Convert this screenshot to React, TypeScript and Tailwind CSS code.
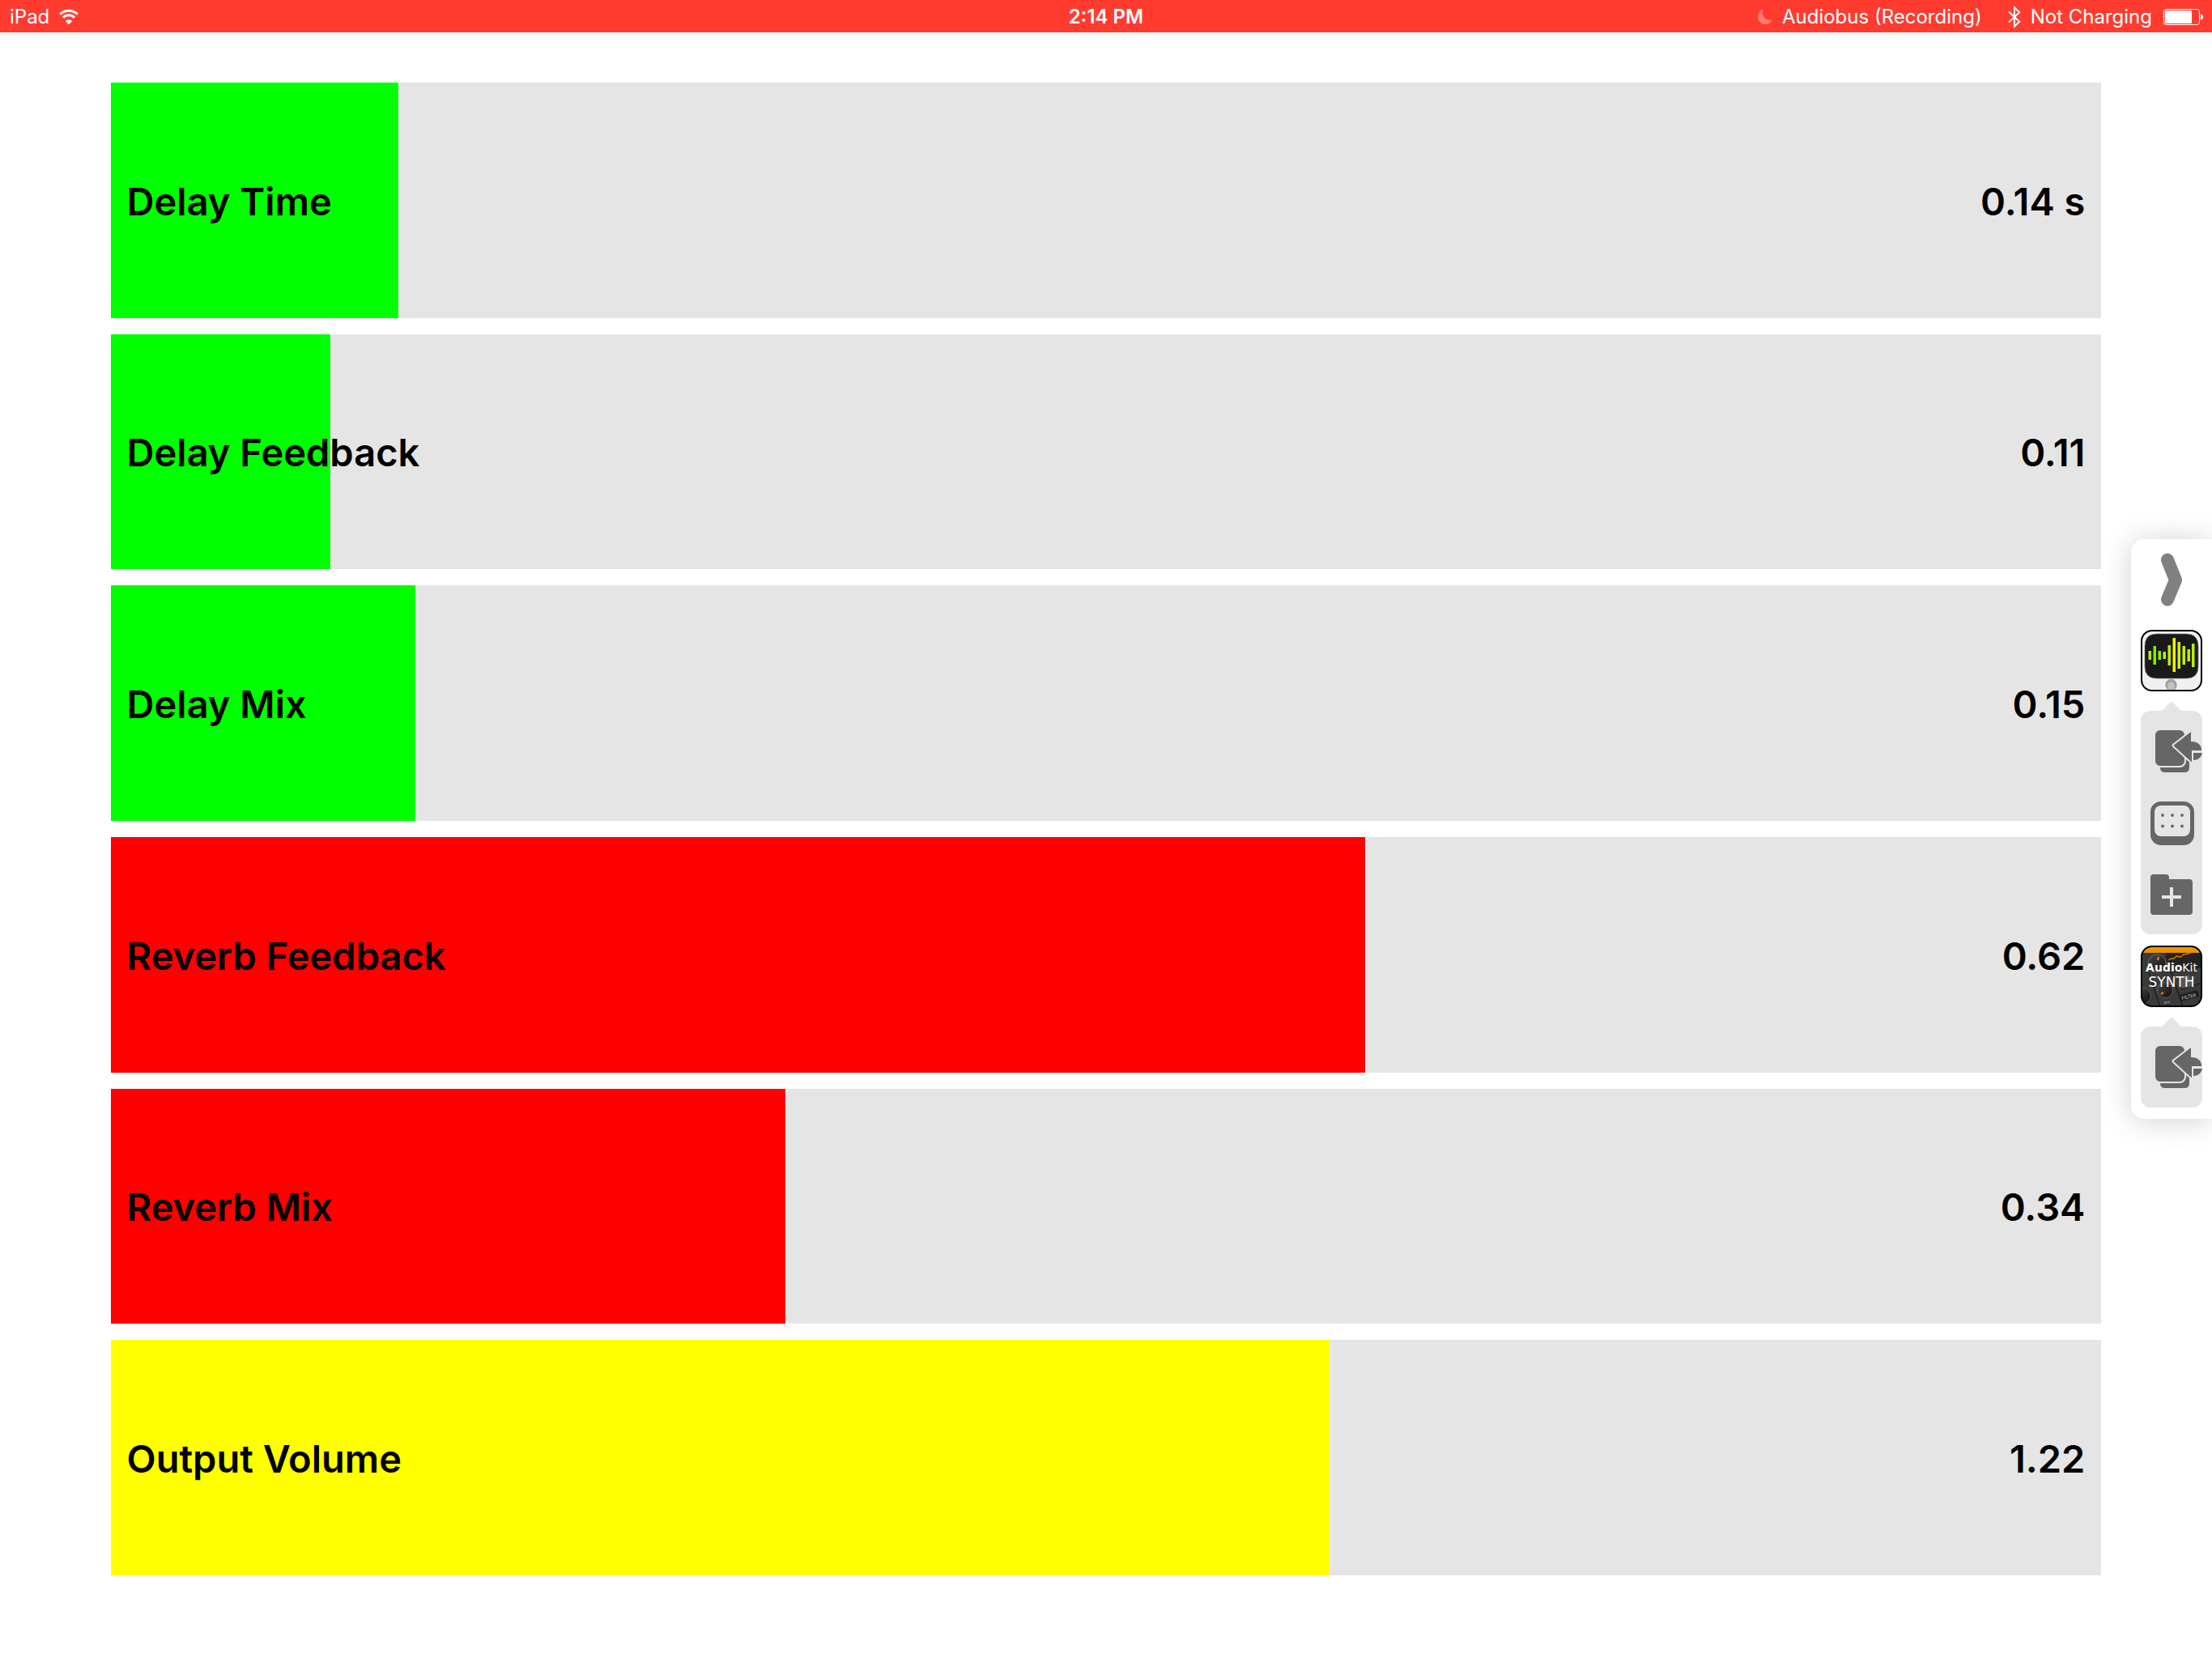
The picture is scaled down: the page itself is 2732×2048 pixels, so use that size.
import { useState, type ReactNode } from "react";

type Tone = "green" | "red" | "yellow";

const toneClass: Record<Tone, string> = {
  green: "bg-[#00ff00]",
  red: "bg-[#ff0000]",
  yellow: "bg-[#ffff00]",
};

type Parameter = { id: string; label: string; value: number; max: number; unit?: string; tone: Tone };

const parameters: Parameter[] = [
  { id: "delay-time", label: "Delay Time", value: 0.1444, max: 1, unit: " s", tone: "green" },
  { id: "delay-feedback", label: "Delay Feedback", value: 0.1102, max: 1, tone: "green" },
  { id: "delay-mix", label: "Delay Mix", value: 0.153, max: 1, tone: "green" },
  { id: "reverb-feedback", label: "Reverb Feedback", value: 0.6203, max: 0.9845, tone: "red" },
  { id: "reverb-mix", label: "Reverb Mix", value: 0.339, max: 1, tone: "red" },
  { id: "output-volume", label: "Output Volume", value: 1.2245, max: 2, tone: "yellow" },
];

function ParameterSlider({ id, label, value, max, unit = "", tone }: Parameter) {
  const [current, setCurrent] = useState(value);
  return (
    <div className="relative flex items-center justify-between overflow-hidden bg-[#e5e5e5] px-5 pt-0.5 text-[47px] leading-none font-semibold text-black">
      <div className={`absolute inset-y-0 left-0 ${toneClass[tone]}`} style={{ width: `${(current / max) * 100}%` }} />
      <label htmlFor={id} className="relative">
        {label}
      </label>
      <output htmlFor={id} className="relative">
        {current.toFixed(2)}
        {unit}
      </output>
      <input
        id={id}
        type="range"
        min={0}
        max={max}
        step="any"
        value={current}
        onChange={(e) => setCurrent(Number(e.target.value))}
        className="absolute inset-0 h-full w-full cursor-pointer opacity-0"
      />
    </div>
  );
}

function WifiIcon() {
  return (
    <svg viewBox="0 0 24 20" className="h-5 w-6" fill="none" aria-hidden="true">
      <path d="M1.2 6.6a15.4 15.4 0 0 1 21.6 0" stroke="white" strokeWidth="3" />
      <path d="M5 10.7a10 10 0 0 1 14 0" stroke="white" strokeWidth="3" />
      <path d="M12 19.2 7.8 14.9a6 6 0 0 1 8.4 0z" fill="white" />
    </svg>
  );
}

function MoonIcon() {
  return (
    <svg viewBox="0 0 18 20" className="h-5 w-[18px]" aria-hidden="true">
      <path d="M6.6.6A9.4 9.4 0 1 0 18 13.2 9.2 9.2 0 0 1 6.6.6z" fill="#ff7a71" />
    </svg>
  );
}

function BluetoothIcon() {
  return (
    <svg viewBox="0 0 16 28" className="h-7 w-4" fill="none" stroke="white" strokeWidth="2" aria-hidden="true">
      <path d="M1 7.5 14.2 19.8 8 25.6V2.4l6.2 5.8L1 20.5" />
    </svg>
  );
}

function BatteryIcon() {
  return (
    <svg viewBox="0 0 50 20" className="h-5 w-[50px]" aria-hidden="true">
      <rect x=".5" y=".5" width="44" height="19" rx="3" fill="none" stroke="white" />
      <rect x="2" y="2" width="33" height="16" rx="1" fill="white" />
      <path d="M46 6.5c2 0 3 1.500 3 3.500s-1 3.500-3 3.500z" fill="white" />
    </svg>
  );
}

function StatusBar() {
  return (
    <header className="grid h-10 grid-cols-3 items-center bg-[#ff3b30] px-2.5 pt-0.5 text-2xl leading-7 text-white">
      <div className="flex items-center gap-3 pl-0.5">
        <span>iPad</span>
        <WifiIcon />
      </div>
      <time className="text-center font-semibold">2:14 PM</time>
      <div className="flex items-center justify-end">
        <MoonIcon />
        <span className="ml-3">Audiobus (Recording)</span>
        <span className="ml-8 flex">
          <BluetoothIcon />
        </span>
        <span className="mr-3.5 ml-3">Not Charging</span>
        <BatteryIcon />
      </div>
    </header>
  );
}

function CollapseIcon() {
  return (
    <svg viewBox="0 0 28 68" className="h-[68px] w-7" aria-hidden="true">
      <path d="M9 9.500 19 34.500 9 58.500" fill="none" stroke="#808080" strokeWidth="16" strokeLinecap="round" strokeLinejoin="round" />
    </svg>
  );
}

const waveBars = [
  { x: 9.5, top: 26, bottom: 37, color: "#b4f000" },
  { x: 15.5, top: 20, bottom: 43, color: "#7df000" },
  { x: 21.5, top: 26, bottom: 37, color: "#8ff000" },
  { x: 27.5, top: 27, bottom: 36, color: "#b8f000" },
  { x: 33.5, top: 19, bottom: 44, color: "#b8f000" },
  { x: 39.5, top: 10, bottom: 52, color: "#f2f200" },
  { x: 45.5, top: 15, bottom: 48, color: "#d0f000" },
  { x: 51.5, top: 20, bottom: 43, color: "#c4f000" },
  { x: 57.5, top: 24, bottom: 39, color: "#b8f000" },
  { x: 63, top: 17, bottom: 46, color: "#b8f000" },
];

function AudiobusIcon() {
  return (
    <svg viewBox="0 0 76 76" className="size-[76px]" aria-hidden="true">
      <rect x="1" y="1" width="74" height="74" rx="13" fill="#f0f0f0" stroke="black" strokeWidth="2" />
      <path d="M5 20Q5 5 20 5H56Q71 5 71 20V45Q71 60 56 60H20Q5 60 5 45z" fill="#191919" stroke="#777070" strokeWidth=".7" />
      {waveBars.map((bar) => (
        <rect key={bar.x} x={bar.x} y={bar.top} width="3.500" height={bar.bottom - bar.top} fill={bar.color} />
      ))}
      <clipPath id="home-button">
        <rect x="20" y="60" width="36" height="14" />
      </clipPath>
      <g clipPath="url(#home-button)">
        <circle cx="37.500" cy="68" r="7.200" fill="#a0a0a0" />
        <ellipse cx="37.500" cy="70" rx="4.300" ry="6" fill="#c2c2c2" />
      </g>
    </svg>
  );
}

function SynthIcon() {
  return (
    <svg viewBox="0 0 76 76" className="size-[76px]" aria-hidden="true">
      <defs>
        <clipPath id="synth-tile">
          <rect x="1" y="1" width="74" height="74" rx="13" />
        </clipPath>
        <linearGradient id="knob" x1="0" y1="0" x2="1" y2="1">
          <stop offset="0" stopColor="#4a4a4a" />
          <stop offset="1" stopColor="#0c0c0c" />
        </linearGradient>
        <linearGradient id="strip" x1="0" y1="0" x2="0" y2="1">
          <stop offset="0" stopColor="#f5a10c" />
          <stop offset="1" stopColor="#e28c00" />
        </linearGradient>
      </defs>
      <g clipPath="url(#synth-tile)">
        <rect width="76" height="76" fill="#3a3a3b" />
        <path d="M31 9 76 -2V27L36 34z" fill="#232324" />
        <path d="M10 33 24 76M31 12 52 76M50 54 76 46" stroke="#202020" strokeWidth="1.500" />
        <path d="m47 39 13-3 4 14-13 3z" fill="#55565a" />
        <path d="m48 61 22-6 2 8-22 6z" fill="#1c1c1c" />
        <circle cx="20" cy="22" r="11" fill="url(#knob)" stroke="#707070" strokeWidth=".8" />
        <circle cx="30" cy="55" r="9.500" fill="url(#knob)" stroke="#6a6a6a" strokeWidth=".8" />
        <circle cx="3" cy="62" r="9.500" fill="url(#knob)" stroke="#6a6a6a" strokeWidth=".8" />
        <path d="m22 14-1 4M25 60l3-2" stroke="#f07800" strokeWidth="2.500" />
        <path d="m34 18 4-2h3l3-3 5 1 4-3 5-1 14-5" fill="none" stroke="#d98000" strokeWidth="1.300" />
        <rect width="76" height="9" fill="url(#strip)" />
        <text x="51" y="67" fontFamily="Roboto, sans-serif" fontSize="6" fill="#c8c8c8" transform="rotate(-13 51 67)">
          FILTER
        </text>
        <text x="29" y="72" fontFamily="Roboto, sans-serif" fontSize="4" fill="#b8b8b8" transform="rotate(-10 29 72)">
          Amt
        </text>
        <text x="38" y="32" textAnchor="middle" fontFamily="DejaVu Sans, sans-serif" fontSize="14" fill="white">
          <tspan fontWeight="700">Audio</tspan>
          <tspan>Kit</tspan>
        </text>
        <text x="38" y="51" textAnchor="middle" fontFamily="DejaVu Sans, sans-serif" fontSize="17" fill="white">
          SYNTH
        </text>
      </g>
      <rect x="1" y="1" width="74" height="74" rx="13" fill="none" stroke="black" strokeWidth="2" />
    </svg>
  );
}

function SwitchAppIcon() {
  return (
    <svg viewBox="0 0 60 54" className="ml-4 h-[54px] w-[60px]" aria-hidden="true">
      <path d="M8 40H36q4 0 4-4V18q4 0 4 4V47q0 6-6 6H14q-6 0-6-6z" fill="#666" />
      <rect x="1" y="0" width="38" height="46" rx="7" fill="#666" stroke="#e5e5e5" strokeWidth="2" />
      <path d="M25 18 47 1v13c8 0 13 5 13 12v1H48v14h-2L24 21q-1-2 1-3z" fill="#666" stroke="#e5e5e5" strokeWidth="2" />
      <path d="M49 29h11c-1 5-5 9-11 9z" fill="#666" />
    </svg>
  );
}

function PadIcon() {
  return (
    <svg viewBox="-2 -2 56 56" className="size-14" aria-hidden="true">
      <rect width="54" height="54" rx="13" fill="#666" />
      <rect x="5" y="5" width="44" height="38" rx="8" fill="#e5e5e5" />
      {[15, 27, 39].map((x) => (
        <g key={x} fill="#666">
          <circle cx={x} cy="17" r="1.900" />
          <circle cx={x} cy="30.500" r="1.900" />
        </g>
      ))}
    </svg>
  );
}

function AddFolderIcon() {
  return (
    <svg viewBox="-2 -2 56 54" className="h-[54px] w-14" aria-hidden="true">
      <path d="M4 1H19q4 0 4 4v2H48q4 0 4 4V47q0 4-4 4H4q-4 0-4-4V5q0-4 4-4z" fill="#666" />
      <path d="M26 17V41M14 29H38" stroke="#e5e5e5" strokeWidth="4" />
    </svg>
  );
}

function DockButton({ label, children }: { label: string; children: ReactNode }) {
  return (
    <button type="button" aria-label={label} className="flex h-[88px] w-full items-center justify-center">
      {children}
    </button>
  );
}

function DockGroup({ children }: { children: ReactNode }) {
  return (
    <div className="flex w-full flex-col items-center">
      <svg viewBox="0 0 24 12" className="h-3 w-6" aria-hidden="true">
        <path d="M0 12 12 0l12 12z" fill="#e5e5e5" />
      </svg>
      <div className="w-full overflow-hidden rounded-xl bg-[#e5e5e5] py-1.5">{children}</div>
    </div>
  );
}

function Dock() {
  return (
    <aside
      aria-label="Audiobus panel"
      className="absolute top-[666px] right-0 flex w-[100px] flex-col items-center rounded-l-2xl bg-white px-3 pb-3.5 shadow-[0_2px_36px_rgba(0,0,0,0.19)]"
    >
      <button type="button" aria-label="Collapse panel" className="flex h-[112px] w-full items-start justify-center pt-4">
        <CollapseIcon />
      </button>
      <button type="button" aria-label="Audiobus" className="mb-3">
        <AudiobusIcon />
      </button>
      <DockGroup>
        <DockButton label="Switch to Audiobus">
          <SwitchAppIcon />
        </DockButton>
        <DockButton label="Show pads">
          <PadIcon />
        </DockButton>
        <DockButton label="Add preset">
          <AddFolderIcon />
        </DockButton>
      </DockGroup>
      <button type="button" aria-label="AudioKit Synth" className="mt-3.5 mb-3">
        <SynthIcon />
      </button>
      <DockGroup>
        <DockButton label="Switch to AudioKit Synth">
          <SwitchAppIcon />
        </DockButton>
      </DockGroup>
    </aside>
  );
}

export default function App() {
  return (
    <div className="relative flex min-h-screen flex-col overflow-hidden bg-white font-['Inter',sans-serif]">
      <StatusBar />
      <main className="grid flex-1 auto-rows-fr gap-5 px-[5%] pt-[62px] pb-[102px]">
        {parameters.map((p) => (
          <ParameterSlider key={p.id} {...p} />
        ))}
      </main>
      <Dock />
    </div>
  );
}
